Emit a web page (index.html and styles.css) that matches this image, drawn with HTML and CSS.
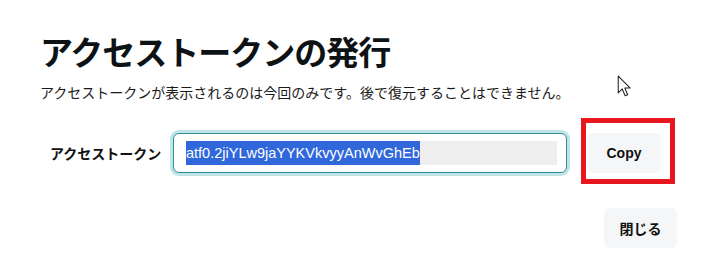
FILE: index.html
```html
<!DOCTYPE html>
<html lang="ja">
<head>
  <meta charset="UTF-8">
  <meta name="viewport" content="width=device-width, initial-scale=1.0">
  <title>アクセストークンの発行</title>
  <link rel="stylesheet" href="styles.css">
</head>
<body>
  <div class="dialog">
    <h1 class="title">アクセストークンの発行</h1>
    <p class="lead">アクセストークンが表示されるのは今回のみです。後で復元することはできません。</p>

    <div class="token-row">
      <label class="token-label">アクセストークン</label>
      <div class="token-field">
        <span class="token-value"><span class="selected">atf0.2jiYLw9jaYYKVkvyyAnWvGhEb</span></span>
      </div>
      <button class="btn">Copy</button>
    </div>

    <div class="footer">
      <button class="btn">閉じる</button>
    </div>
  </div>

  <div class="highlight"></div>

  <svg class="cursor" viewBox="0 0 13 21" width="14" height="22">
    <path d="M1 1 L1 17 L4.8 13.3 L7.6 19.8 L10 18.8 L7.3 12.4 L12.3 12.4 Z" fill="#fff" stroke="#222" stroke-width="1" stroke-linejoin="round"/>
  </svg>
</body>
</html>
```

FILE: styles.css
```css
body {
  margin: 0;
  padding: 0;
  background: #ffffff;
  color: #111111;
  font-family: "Liberation Sans", "Noto Sans CJK JP", sans-serif;
}
.dialog {
  padding: 31px 37px 0 40px;
}
.title {
  margin: 0;
  font-family: "Noto Sans CJK JP", sans-serif;
  font-size: 33px;
  line-height: 40px;
  letter-spacing: -1px;
  font-weight: 700;
  color: #0d1215;
}
.lead {
  margin: 11px 0 0;
  font-family: "Noto Sans CJK JP", sans-serif;
  font-size: 14px;
  line-height: 21px;
  color: #1a1a1a;
}
.token-row {
  display: flex;
  align-items: center;
  margin-top: 30px;
  padding-left: 10px;
}
.token-label {
  font-family: "Noto Sans CJK JP", sans-serif;
  font-size: 14px;
  font-weight: 700;
  width: 112px;
  margin-right: 11px;
}
.token-field {
  box-sizing: border-box;
  width: 394px;
  height: 40px;
  padding: 7px 9px 7px 12px;
  border: 1px solid #2f8f99;
  border-radius: 6px;
  box-shadow: 0 0 0 3px #bfe3e7;
  background: #ffffff;
  margin-right: 20px;
}
.token-value {
  display: block;
  height: 24px;
  line-height: 24px;
  background: #eeeeee;
  font-size: 14.5px;
  white-space: nowrap;
  overflow: hidden;
}
.selected {
  display: inline-block;
  background: #3067db;
  color: #ffffff;
}
.btn {
  width: 74px;
  height: 40px;
  border: none;
  border-radius: 6px;
  background: #f5f6f7;
  color: #111111;
  font-family: "Liberation Sans", "Noto Sans CJK JP", sans-serif;
  font-size: 14px;
  font-weight: 700;
  padding: 0;
}
.footer {
  display: flex;
  justify-content: flex-end;
  margin-top: 35px;
}
.footer .btn {
  width: 73px;
  font-family: "Noto Sans CJK JP", sans-serif;
}
.highlight {
  position: absolute;
  left: 581px;
  top: 118px;
  width: 84px;
  height: 56px;
  border: 5px solid #e8161f;
}
.cursor {
  position: absolute;
  left: 617px;
  top: 75px;
}
```
